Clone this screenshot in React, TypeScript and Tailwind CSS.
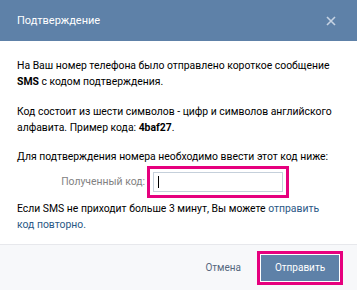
export default function App() {
  const font = { fontFamily: 'Roboto, "Liberation Sans", Arial, sans-serif' };
  return (
    <div className="w-[357px] h-[290px] bg-white flex flex-col overflow-hidden" style={font}>
      <div className="h-[41px] shrink-0 bg-[#5e81a8] flex items-center justify-between pl-[17px] pr-[21px]">
        <span className="text-white text-[11px] leading-none">Подтверждение</span>
        <svg width="10" height="10" viewBox="0 0 10 10" className="text-[#c6d3e3]">
          <path d="M1 1L9 9M9 1L1 9" stroke="currentColor" strokeWidth="1.6" />
        </svg>
      </div>
      <div className="flex-1 pl-[17px] pr-[24px] pt-[17px] text-[10.4px] leading-[16px] text-black">
        <p>
          На Ваш номер телефона было отправлено короткое сообщение <b className="font-bold">SMS</b> с кодом подтверждения.
        </p>
        <p className="mt-[14px]">
          Код состоит из шести символов - цифр и символов английского алфавита. Пример кода: <b className="font-bold">4baf27</b>.
        </p>
        <p className="mt-[13px]">Для подтверждения номера необходимо ввести этот код ниже:</p>
        <div className="flex items-center mt-[1px]">
          <div className="w-[128px] text-right text-[#828282]">Полученный код:</div>
          <div className="ml-[2px] border-[3px] border-[#e6007e] p-[3px]">
            <div className="w-[130px] h-[20px] border border-[#c5d0db] bg-white flex items-center pl-[4px]">
              <span className="w-[1px] h-[12px] bg-black" />
            </div>
          </div>
        </div>
        <p className="mt-[3px]">
          Если SMS не приходит больше 3 минут, Вы можете <span className="text-[#2a5885]">отправить код повторно.</span>
        </p>
      </div>
      <div className="h-[46px] shrink-0 bg-[#f7f8fa] border-t border-[#e7e8ec] flex items-center justify-end pr-[14px]">
        <span className="text-[10px] text-[#55677d] mr-[16px]">Отмена</span>
        <div className="border-[3px] border-[#e6007e] p-[1px] bg-white">
          <div className="w-[78px] h-[26px] bg-[#5e81a8] text-white text-[10px] flex items-center justify-center">
            Отправить
          </div>
        </div>
      </div>
    </div>
  );
}
